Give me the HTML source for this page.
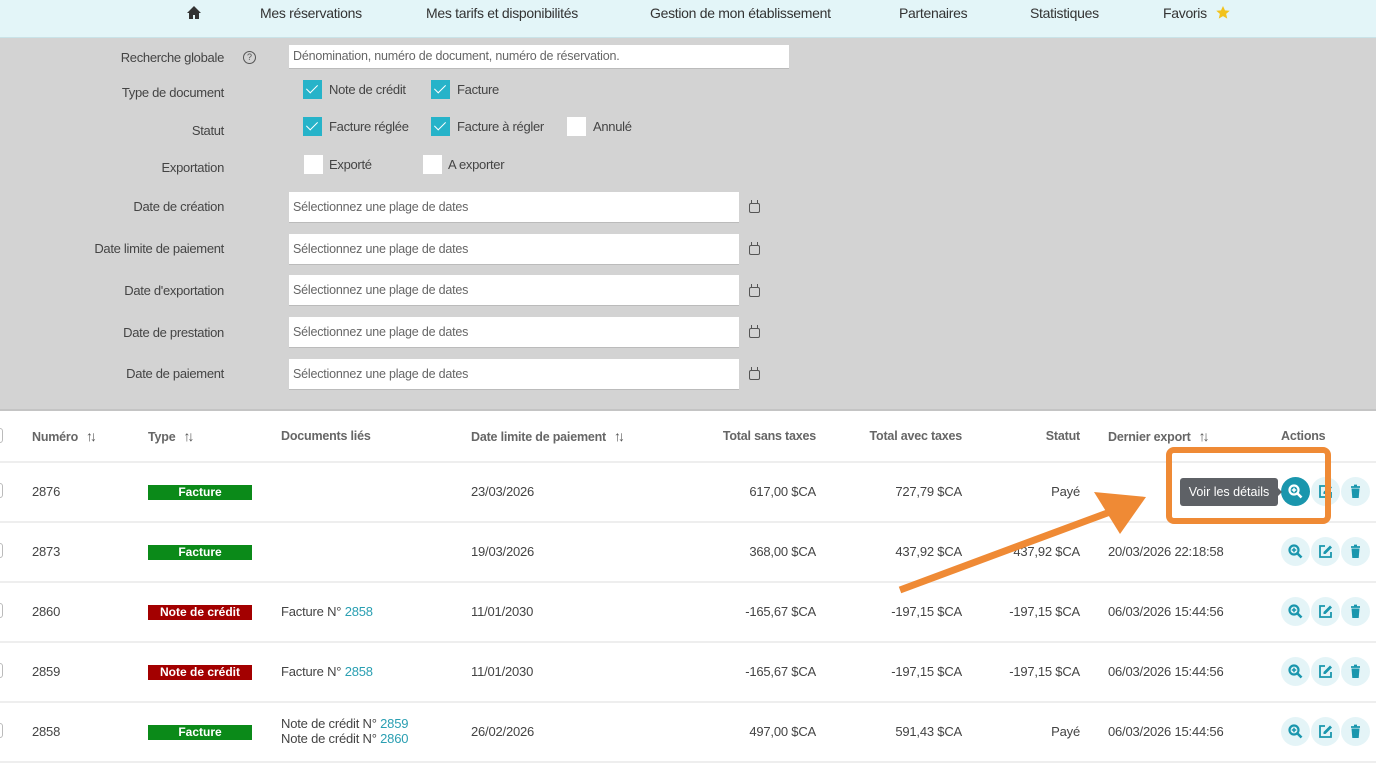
<!DOCTYPE html>
<html><head><meta charset="utf-8">
<style>
*{margin:0;padding:0;box-sizing:border-box}
body{width:1376px;height:770px;overflow:hidden;background:#fff;font-family:"Liberation Sans",sans-serif;color:#444;font-size:13px;position:relative}
.a{position:absolute;white-space:nowrap}
.nav{position:absolute;left:0;top:0;width:1376px;height:38px;background:#e3f5f8;border-bottom:1px solid #c9e3e8}
.nav span{position:absolute;top:5px;font-size:14px;color:#333;letter-spacing:-0.3px}
.filt{position:absolute;left:0;top:38px;width:1376px;height:373px;background:#d3d3d3;border-bottom:2px solid #c4c4c4}
.lbl{position:absolute;width:224px;text-align:right;font-size:13px;color:#444;letter-spacing:-0.3px}
.inp{position:absolute;left:289px;width:450px;height:31px;background:#fff;border-bottom:1px solid #bbb;color:#666;padding:8px 4px;font-size:12.5px;letter-spacing:-0.2px}
.cb{position:absolute;width:19px;height:19px;background:#fff}
.cb.on{background:#26b3c9}
.cb.on::after{content:"";position:absolute;left:6px;top:2px;width:5px;height:10px;border:solid #fff;border-width:0 1.5px 1.5px 0;transform:rotate(45deg)}
.cl{position:absolute;font-size:13px;color:#444;letter-spacing:-0.3px}
.cal{position:absolute;left:749px;width:11px;height:10px;border:1.3px solid #555;border-radius:2px}
.cal::before{content:"";position:absolute;left:1px;top:-4px;width:5px;height:3px;border-left:1.3px solid #555;border-right:1.3px solid #555}
.th{position:absolute;top:428px;height:16px;line-height:16px;font-weight:bold;font-size:12.5px;color:#666;letter-spacing:-0.2px}
.th i{font-style:normal;font-weight:normal;font-size:14px;color:#555;margin-left:8px;letter-spacing:-3px}
.line{position:absolute;left:0;width:1376px;height:2px;background:#eee}
.badge{position:absolute;left:148px;width:104px;height:15px;color:#fff;font-weight:bold;font-size:12px;text-align:center;line-height:15px}
.g{background:#0b8a19}.r{background:#a30000}
.td{position:absolute;font-size:13px;color:#444;letter-spacing:-0.2px}
.rt{text-align:right}
.lk{color:#2a9fb2}
.btn{position:absolute;width:29px;height:29px;border-radius:50%;background:#e4f4f7}
.btn svg{position:absolute;left:7px;top:7px}
.chk{position:absolute;left:-10px;width:13px;height:15px;border:1px solid #bbb;border-radius:3px;background:#fff}
</style></head><body>
<div class="nav">
<svg class="a" style="left:186px;top:5px" width="16" height="15" viewBox="0 0 16 15"><path d="M8 1L1 8h2v6h4v-4h2v4h4V8h2z" fill="#333"/></svg>
<span style="left:260px">Mes réservations</span>
<span style="left:426px">Mes tarifs et disponibilités</span>
<span style="left:650px">Gestion de mon établissement</span>
<span style="left:899px">Partenaires</span>
<span style="left:1030px">Statistiques</span>
<span style="left:1163px">Favoris</span>
<svg class="a" style="left:1215px;top:5px" width="16" height="15" viewBox="0 0 24 24"><path d="M12 1.5l3.2 7 7.6.7-5.8 5 1.8 7.5L12 17.7l-6.8 4 1.8-7.5-5.8-5 7.6-.7z" fill="#f2c21c"/></svg>
</div>
<div class="filt"></div>
<div class="lbl" style="left:0;top:50px">Recherche globale</div>
<div class="a" style="left:243px;top:51px;width:13px;height:13px;border:1.2px solid #555;border-radius:50%;font-size:9px;text-align:center;line-height:11px;color:#555">?</div>
<div class="inp" style="top:45px;width:500px;height:24px;padding:4px">Dénomination, numéro de document, numéro de réservation.</div>
<div class="lbl" style="left:0;top:85px">Type de document</div>
<div class="cb on" style="left:303px;top:80px"></div><div class="cl" style="left:329px;top:82px">Note de crédit</div>
<div class="cb on" style="left:431px;top:80px"></div><div class="cl" style="left:457px;top:82px">Facture</div>
<div class="lbl" style="left:0;top:123px">Statut</div>
<div class="cb on" style="left:303px;top:117px"></div><div class="cl" style="left:329px;top:119px">Facture réglée</div>
<div class="cb on" style="left:431px;top:117px"></div><div class="cl" style="left:457px;top:119px">Facture à régler</div>
<div class="cb" style="left:567px;top:117px"></div><div class="cl" style="left:593px;top:119px">Annulé</div>
<div class="lbl" style="left:0;top:160px">Exportation</div>
<div class="cb" style="left:304px;top:155px"></div><div class="cl" style="left:329px;top:157px">Exporté</div>
<div class="cb" style="left:423px;top:155px"></div><div class="cl" style="left:448px;top:157px">A exporter</div>

<div class="lbl" style="left:0;top:199px">Date de création</div><div class="inp" style="top:192px">Sélectionnez une plage de dates</div><div class="cal" style="top:203px"></div>
<div class="lbl" style="left:0;top:241px">Date limite de paiement</div><div class="inp" style="top:234px">Sélectionnez une plage de dates</div><div class="cal" style="top:245px"></div>
<div class="lbl" style="left:0;top:283px">Date d'exportation</div><div class="inp" style="top:275px">Sélectionnez une plage de dates</div><div class="cal" style="top:287px"></div>
<div class="lbl" style="left:0;top:325px">Date de prestation</div><div class="inp" style="top:317px">Sélectionnez une plage de dates</div><div class="cal" style="top:328px"></div>
<div class="lbl" style="left:0;top:366px">Date de paiement</div><div class="inp" style="top:359px">Sélectionnez une plage de dates</div><div class="cal" style="top:370px"></div>

<div class="chk" style="top:428px"></div>
<div class="th" style="left:32px">Numéro<i>↑↓</i></div>
<div class="th" style="left:148px">Type<i>↑↓</i></div>
<div class="th" style="left:281px">Documents liés</div>
<div class="th" style="left:471px">Date limite de paiement<i>↑↓</i></div>
<div class="th rt" style="left:616px;width:200px">Total sans taxes</div>
<div class="th rt" style="left:762px;width:200px">Total avec taxes</div>
<div class="th rt" style="left:980px;width:100px">Statut</div>
<div class="th" style="left:1108px">Dernier export<i>↑↓</i></div>
<div class="th" style="left:1281px">Actions</div>

<div class="line" style="top:461px"></div>
<div class="line" style="top:521px"></div>
<div class="line" style="top:581px"></div>
<div class="line" style="top:641px"></div>
<div class="line" style="top:701px"></div>
<div class="line" style="top:761px"></div>

<div class="chk" style="top:483px"></div>
<div class="td" style="left:32px;top:484px">2876</div>
<div class="badge g" style="top:485px">Facture</div>
<div class="td" style="left:471px;top:484px">23/03/2026</div>
<div class="td rt" style="left:616px;width:200px;top:484px">617,00 $CA</div>
<div class="td rt" style="left:762px;width:200px;top:484px">727,79 $CA</div>
<div class="td rt" style="left:980px;width:100px;top:484px">Payé</div>

<div class="chk" style="top:543px"></div>
<div class="td" style="left:32px;top:544px">2873</div>
<div class="badge g" style="top:545px">Facture</div>
<div class="td" style="left:471px;top:544px">19/03/2026</div>
<div class="td rt" style="left:616px;width:200px;top:544px">368,00 $CA</div>
<div class="td rt" style="left:762px;width:200px;top:544px">437,92 $CA</div>
<div class="td rt" style="left:980px;width:100px;top:544px">437,92 $CA</div>
<div class="td" style="left:1108px;top:544px">20/03/2026 22:18:58</div>

<div class="chk" style="top:603px"></div>
<div class="td" style="left:32px;top:604px">2860</div>
<div class="badge r" style="top:605px">Note de crédit</div>
<div class="td" style="left:281px;top:604px">Facture N° <span class="lk">2858</span></div>
<div class="td" style="left:471px;top:604px">11/01/2030</div>
<div class="td rt" style="left:616px;width:200px;top:604px">-165,67 $CA</div>
<div class="td rt" style="left:762px;width:200px;top:604px">-197,15 $CA</div>
<div class="td rt" style="left:980px;width:100px;top:604px">-197,15 $CA</div>
<div class="td" style="left:1108px;top:604px">06/03/2026 15:44:56</div>

<div class="chk" style="top:663px"></div>
<div class="td" style="left:32px;top:664px">2859</div>
<div class="badge r" style="top:665px">Note de crédit</div>
<div class="td" style="left:281px;top:664px">Facture N° <span class="lk">2858</span></div>
<div class="td" style="left:471px;top:664px">11/01/2030</div>
<div class="td rt" style="left:616px;width:200px;top:664px">-165,67 $CA</div>
<div class="td rt" style="left:762px;width:200px;top:664px">-197,15 $CA</div>
<div class="td rt" style="left:980px;width:100px;top:664px">-197,15 $CA</div>
<div class="td" style="left:1108px;top:664px">06/03/2026 15:44:56</div>

<div class="chk" style="top:723px"></div>
<div class="td" style="left:32px;top:724px">2858</div>
<div class="badge g" style="top:725px">Facture</div>
<div class="td" style="left:281px;top:716px">Note de crédit N° <span class="lk">2859</span></div>
<div class="td" style="left:281px;top:731px">Note de crédit N° <span class="lk">2860</span></div>
<div class="td" style="left:471px;top:724px">26/02/2026</div>
<div class="td rt" style="left:616px;width:200px;top:724px">497,00 $CA</div>
<div class="td rt" style="left:762px;width:200px;top:724px">591,43 $CA</div>
<div class="td rt" style="left:980px;width:100px;top:724px">Payé</div>
<div class="td" style="left:1108px;top:724px">06/03/2026 15:44:56</div>

<svg width="0" height="0" style="position:absolute"><defs>
<g id="zm"><circle cx="6" cy="6" r="4.5" fill="none" stroke="#1a96ad" stroke-width="2.2"/><path d="M9.5 9.5l4 4" stroke="#1a96ad" stroke-width="2.6"/><path d="M6 3.8v4.4M3.8 6h4.4" stroke="#1a96ad" stroke-width="1.5"/></g>
<g id="ed"><path d="M7 2H2v11h11V8" fill="none" stroke="#1a96ad" stroke-width="1.8"/><path d="M12 1.5l2 2-6.5 6.5H5.5V8z" fill="#1a96ad"/></g>
<g id="tr"><path d="M3 3h9M6 1.5h3" stroke="#1a96ad" stroke-width="1.8"/><path d="M3.5 4.5h8l-.8 9.5h-6.4z" fill="#1a96ad"/></g>
</defs></svg>
<div class="btn" style="left:1281px;top:477px;background:#1a96ad"><svg width="15" height="15"><g><circle cx="6" cy="6" r="4.5" fill="none" stroke="#fff" stroke-width="2.2"/><path d="M9.5 9.5l4 4" stroke="#fff" stroke-width="2.6"/><path d="M6 3.8v4.4M3.8 6h4.4" stroke="#fff" stroke-width="1.5"/></g></svg></div>
<div class="btn" style="left:1311px;top:477px"><svg width="15" height="15"><use href="#ed"/></svg></div>
<div class="btn" style="left:1341px;top:477px"><svg width="15" height="15"><use href="#tr"/></svg></div>
<div class="btn" style="left:1281px;top:537px"><svg width="15" height="15"><use href="#zm"/></svg></div>
<div class="btn" style="left:1311px;top:537px"><svg width="15" height="15"><use href="#ed"/></svg></div>
<div class="btn" style="left:1341px;top:537px"><svg width="15" height="15"><use href="#tr"/></svg></div>
<div class="btn" style="left:1281px;top:597px"><svg width="15" height="15"><use href="#zm"/></svg></div>
<div class="btn" style="left:1311px;top:597px"><svg width="15" height="15"><use href="#ed"/></svg></div>
<div class="btn" style="left:1341px;top:597px"><svg width="15" height="15"><use href="#tr"/></svg></div>
<div class="btn" style="left:1281px;top:657px"><svg width="15" height="15"><use href="#zm"/></svg></div>
<div class="btn" style="left:1311px;top:657px"><svg width="15" height="15"><use href="#ed"/></svg></div>
<div class="btn" style="left:1341px;top:657px"><svg width="15" height="15"><use href="#tr"/></svg></div>
<div class="btn" style="left:1281px;top:717px"><svg width="15" height="15"><use href="#zm"/></svg></div>
<div class="btn" style="left:1311px;top:717px"><svg width="15" height="15"><use href="#ed"/></svg></div>
<div class="btn" style="left:1341px;top:717px"><svg width="15" height="15"><use href="#tr"/></svg></div>

<div class="a" style="left:1180px;top:478px;width:98px;height:28px;background:#5e6166;border-radius:3px;color:#fff;font-size:12.5px;line-height:28px;text-align:center">Voir les détails</div>
<div class="a" style="left:1277px;top:487px;width:0;height:0;border-top:5px solid transparent;border-bottom:5px solid transparent;border-left:5px solid #5e6166"></div>

<div class="a" style="left:1166px;top:447px;width:165px;height:77px;border:6px solid #ef8a35;border-radius:8px"></div>
<svg class="a" style="left:0;top:0" width="1376" height="770"><path d="M900 590L1110 512" stroke="#ef8a35" stroke-width="7" fill="none"/><path d="M1146 497L1094 492 1120 534z" fill="#ef8a35"/></svg>
</body></html>
